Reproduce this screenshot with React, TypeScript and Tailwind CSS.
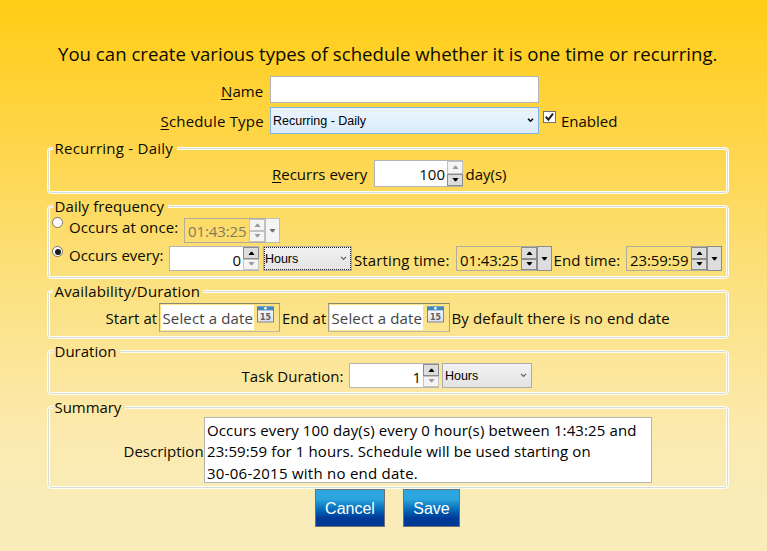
import type { ReactNode } from "react";

function Label({ className, children }: { className: string; children: ReactNode }) {
  return (
    <span className={`block shrink-0 whitespace-nowrap text-[15px] leading-[20px] text-[#0c0a00] ${className}`}>
      {children}
    </span>
  );
}

function Group({ title, titleClass, className, gap, children }: {
  title: string;
  titleClass: string;
  className: string;
  gap: string;
  children: ReactNode;
}) {
  return (
    <section className={`relative ml-[47px] w-[682px] shrink-0 ${className}`}>
      <div
        className={`absolute inset-0 rounded-[4px] border border-[#fffdf4] shadow-[inset_0_0_0_1px_#d5dfd8,inset_0_0_0_2px_#fffdf4] ${gap}`}
      />
      <div className="relative -mt-[9px] flex h-5 pl-[7.5px]">
        <Label className={titleClass}>{title}</Label>
      </div>
      <div className="relative">{children}</div>
    </section>
  );
}

function Triangle({ down, color }: { down?: boolean; color: string }) {
  return (
    <svg width="7" height="4" viewBox="0 0 7 4" fill={color} className="block">
      <path d={down ? "M0.5 0H6.5L4.2 3.2H2.8Z" : "M2.8 0.8H4.2L6.5 4H0.5Z"} />
    </svg>
  );
}

function SpinButton({ down, enabled }: { down?: boolean; enabled: boolean }) {
  return (
    <div
      className={`flex flex-1 items-center justify-center border ${
        enabled ? "border-[#8b8b8b] bg-[#dddddd]" : "border-[#c3c3c0] bg-[#f4f4f4]"
      }`}
    >
      <Triangle down={down} color={enabled ? "#000000" : "#9c9c9c"} />
    </div>
  );
}

function Spinner({ value, className, up, down, valueClass }: {
  value: string;
  className: string;
  up: boolean;
  down: boolean;
  valueClass: string;
}) {
  return (
    <div className={`flex shrink-0 border border-[#b4b4b0] bg-white ${className}`}>
      <div className="flex flex-1 justify-end pr-[2px]">
        <Label className={valueClass}>{value}</Label>
      </div>
      <div className="-mr-px flex w-4 flex-col">
        <SpinButton enabled={up} />
        <SpinButton down enabled={down} />
      </div>
    </div>
  );
}

function TimePicker({ value, disabled, className }: { value: string; disabled?: boolean; className: string }) {
  return (
    <div className={`flex h-[25px] w-24 shrink-0 border border-[#b0ad9f] ${className}`}>
      <Label className={`w-[64px] pl-[3px] tracking-[-0.1px] ${disabled ? "mt-[2px] text-[#85795a]!" : "mt-[3px]"}`}>
        {value}
      </Label>
      <div className="flex w-[16px] flex-col">
        <SpinButton enabled={!disabled} />
        <SpinButton down enabled={!disabled} />
      </div>
      <div
        className={`-my-px -mr-px flex flex-1 items-center justify-center border ${
          disabled ? "border-[#bdbdb8] bg-[#f4f4f4]" : "border-[#8b8b8b] bg-[#dddddd]"
        }`}
      >
        <Triangle down color={disabled ? "#707070" : "#000000"} />
      </div>
    </div>
  );
}

function Chevron({ color, weight }: { color: string; weight: number }) {
  return (
    <svg width="7" height="5" viewBox="0 0 7 5" fill="none" stroke={color} strokeWidth={weight} className="block">
      <path d="M1 0.8L3.5 3.3L6 0.8" />
    </svg>
  );
}

function HoursCombo({ className, focused }: { className: string; focused?: boolean }) {
  return (
    <div
      className={`h-[25px] shrink-0 border border-[#acacac] bg-linear-to-b from-[#f2f2f2] to-[#e3e3e3] ${className}`}
    >
      <div
        className={`flex h-full justify-between border border-dotted pr-[3px] ${
          focused ? "border-[#222222]" : "border-transparent pl-px"
        }`}
      >
        <span className="mt-[2px] text-[12.5px] leading-[18px] tracking-[-0.05px] font-['Liberation_Sans',Arial,sans-serif]">
          Hours
        </span>
        <div className="mt-[8px]">
          <Chevron color="#606060" weight={1.2} />
        </div>
      </div>
    </div>
  );
}

function CalendarIcon({ className }: { className: string }) {
  return (
    <svg width="17" height="17" viewBox="0 0 17 17" className={`mt-px block shrink-0 ${className}`}>
      <defs>
        <linearGradient id="page" x1="0" y1="0" x2="0" y2="1">
          <stop offset="0" stopColor="#ffffff" />
          <stop offset="1" stopColor="#dcdfe8" />
        </linearGradient>
      </defs>
      <rect x="0.5" y="0.5" width="16" height="15.5" fill="url(#page)" stroke="#85868c" />
      <rect x="0" y="0" width="17" height="4.4" fill="#4388b8" />
      <rect x="0" y="0" width="17" height="1" fill="#70a5c8" />
      <circle cx="8.5" cy="2.2" r="1.3" fill="#ffffff" />
      <text x="8.5" y="13.5" textAnchor="middle" fontSize="9" fontWeight="700" fontFamily="DejaVu Sans, sans-serif" fill="#5c5c64" textLength="11" lengthAdjust="spacingAndGlyphs">
        15
      </text>
    </svg>
  );
}

function DatePicker({ className, iconClass }: { className: string; iconClass: string }) {
  return (
    <div className={`flex h-[29px] shrink-0 border border-[#a4a08a] border-t-[#8a8670] border-b-[#bfbca6] p-px ${className}`}>
      <div className="h-[25px] w-[93px] shrink-0 bg-white">
        <Label className="mt-[3px] ml-[1.5px] tracking-[0.14px] text-[#444444]!">Select a date</Label>
      </div>
      <CalendarIcon className={iconClass} />
    </div>
  );
}

function Radio({ checked, className }: { checked?: boolean; className: string }) {
  return (
    <div className={`flex size-[11px] items-center justify-center rounded-full border border-[#77746a] bg-white ${className}`}>
      {checked && <div className="size-[6px] rounded-full bg-[#1c1c1c]" />}
    </div>
  );
}

function ActionButton({ className, children }: { className: string; children: ReactNode }) {
  return (
    <button
      className={`block h-[38px] border border-[#707070] bg-linear-to-b from-[#2ba6de] from-25% to-[#003a98] to-78% pt-px text-[16px] leading-[36px] whitespace-nowrap text-white font-['Liberation_Sans',Arial,sans-serif] ${className}`}
    >
      {children}
    </button>
  );
}

export default function App() {
  return (
    <main className="flex h-[551px] w-[767px] flex-col overflow-hidden bg-[linear-gradient(to_bottom,#ffcd15_0%,#ffd548_25%,#fbe07c_50%,#fceaae_78%,#f9ecb8_90%,#f9ecb8_100%)] font-['Open_Sans','Segoe_UI',sans-serif]">
      <h1 className="mt-[41px] ml-[58px] h-[35px] shrink-0 text-[18.6px] leading-[26px] tracking-[0.015px] whitespace-nowrap text-[#0c0a00]">
        You can create various types of schedule whether it is one time or recurring.
      </h1>

      <div className="flex h-[31px] shrink-0">
        <Label className="mt-[5px] ml-[221px] w-[49px] tracking-[0.1px]"><u className="underline-offset-2">N</u>ame</Label>
        <div className="h-[27px] w-[269px] border border-[#b4b4b0] bg-white" />
      </div>

      <div className="flex h-[40px] shrink-0">
        <Label className="mt-1 ml-[160.5px] w-[109.5px] tracking-[0.18px]"><u className="underline-offset-2">S</u>chedule Type</Label>
        <div className="flex h-[27px] w-[269px] justify-between border border-[#7eb4ea] bg-linear-to-b from-[#ebf4fc] to-[#dcecfc] pr-1 pl-[2px]">
          <span className="mt-1 text-[12.5px] leading-[18px] font-['Liberation_Sans',Arial,sans-serif]">Recurring - Daily</span>
          <div className="mt-[10px]"><Chevron color="#000000" weight={1.5} /></div>
        </div>
        <div className="mt-1 ml-1 h-[12px] w-[13px] border border-[#707070] bg-white">
          <svg width="11" height="10" viewBox="0 0 11 10" fill="none" stroke="#212121" strokeWidth="2">
            <path d="M1.8 4.8L4.4 7.6L9 1.6" />
          </svg>
        </div>
        <Label className="mt-1 ml-[5px]">Enabled</Label>
      </div>

      <Group title="Recurring - Daily" titleClass="tracking-[0.25px]" className="h-[47px]" gap="[clip-path:polygon(0_0,6px_0,6px_4px,130px_4px,130px_0,100%_0,100%_100%,0_100%)]">
        <div className="flex pt-[2px]">
          <Label className="mt-[4px] ml-[225px] w-[102px]"><u className="underline-offset-2">R</u>ecurrs every</Label>
          <Spinner value="100" className="h-[27px] w-[89px]" up={false} down valueClass="mt-[3px]" />
          <Label className="mt-[4px] ml-[2.5px]">day(s)</Label>
        </div>
      </Group>

      <Group title="Daily frequency" titleClass="tracking-[0.08px]" className="mt-[11px] h-[74px]" gap="[clip-path:polygon(0_0,6px_0,6px_4px,121px_4px,121px_0,100%_0,100%_100%,0_100%)]">
        <div className="flex h-[30px]">
          <Radio className="mt-px ml-[5px]" />
          <Label className="mt-px ml-[6px] w-[115px] tracking-[0.1px]">Occurs at once:</Label>
          <TimePicker value="01:43:25" disabled className="mt-[2px]" />
        </div>
        <div className="flex">
          <Radio checked className="ml-[5px]" />
          <Label className="-mt-px ml-[6px] w-[100px]">Occurs every:</Label>
          <Spinner value="0" className="h-[25px] w-[90px]" up down={false} valueClass="mt-[3px]" />
          <HoursCombo focused className="ml-1 w-[89px]" />
          <Label className="mt-[4px] ml-[2px] w-[102px] tracking-[0.12px]">Starting time:</Label>
          <TimePicker value="01:43:25" className="" />
          <Label className="mt-[4px] ml-[1.5px] w-[72.5px] tracking-[0.1px]">End time:</Label>
          <TimePicker value="23:59:59" className="" />
        </div>
      </Group>

      <Group title="Availability/Duration" titleClass="tracking-[0.17px]" className="mt-[11px] h-[49px]" gap="[clip-path:polygon(0_0,6px_0,6px_4px,156px_4px,156px_0,100%_0,100%_100%,0_100%)]">
        <div className="flex pt-[2px]">
          <Label className="mt-[5px] ml-[58.5px] w-[53.5px] tracking-[0.1px]">Start at</Label>
          <DatePicker className="w-[121px]" iconClass="ml-[3px]" />
          <Label className="mt-[5px] ml-[2px] w-[46px]">End at</Label>
          <DatePicker className="w-[122px]" iconClass="ml-[4px]" />
          <Label className="mt-[5px] ml-[1.5px] tracking-[0.12px]">By default there is no end date</Label>
        </div>
      </Group>

      <Group title="Duration" titleClass="" className="mt-[11px] h-[45px]" gap="[clip-path:polygon(0_0,6px_0,6px_4px,73px_4px,73px_0,100%_0,100%_100%,0_100%)]">
        <div className="flex pt-[2px]">
          <Label className="mt-[3px] ml-[194.5px] w-[107.5px] tracking-[0.05px]">Task Duration:</Label>
          <Spinner value="1" className="h-[25px] w-[90px]" up down={false} valueClass="mt-[3px]" />
          <HoursCombo className="ml-[3px] w-[90px]" />
        </div>
      </Group>

      <Group title="Summary" titleClass="tracking-[-0.05px]" className="mt-[11px] h-[83px]" gap="[clip-path:polygon(0_0,6px_0,6px_4px,78px_4px,78px_0,100%_0,100%_100%,0_100%)]">
        <div className="flex">
          <Label className="mt-[24px] ml-[76.5px] w-[80.5px]">Description</Label>
          <div className="h-[66px] w-[448px] border border-[#b4b4b0] bg-white pt-[2px] pl-[2px] text-[15px] leading-[21.33px] whitespace-nowrap">
            <p className="tracking-[0.12px]">Occurs every 100 day(s) every 0 hour(s) between 1:43:25 and</p>
            <p className="tracking-[0.11px]">23:59:59 for 1 hours. Schedule will be used starting on</p>
            <p className="tracking-[0.25px]">30-06-2015 with no end date.</p>
          </div>
        </div>
      </Group>

      <div className="flex shrink-0 gap-[18px] pl-[315px]">
        <ActionButton className="w-[70px]">Cancel</ActionButton>
        <ActionButton className="w-[57px]">Save</ActionButton>
      </div>
    </main>
  );
}
